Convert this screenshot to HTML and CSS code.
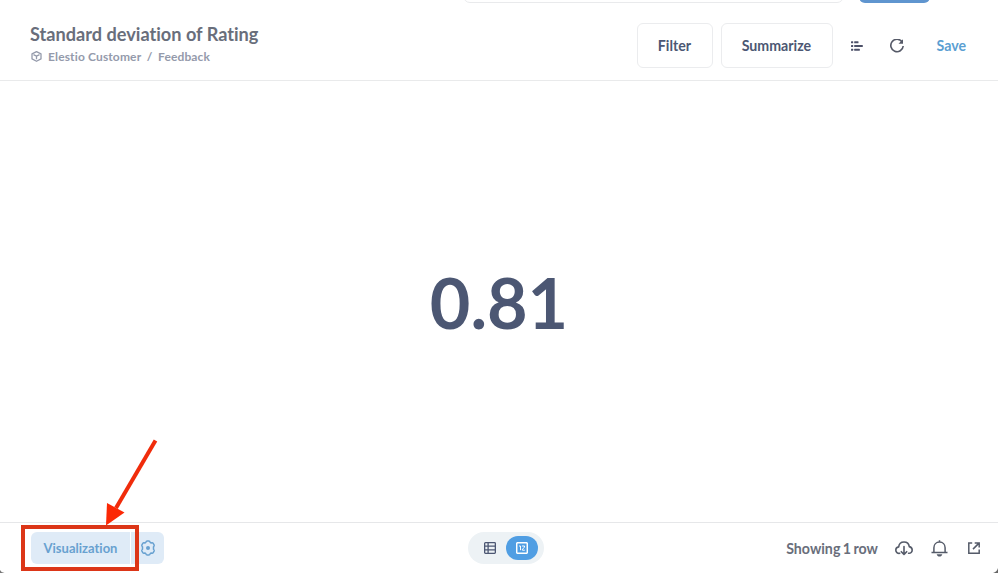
FILE: index.html
```html
<!DOCTYPE html>
<html lang="en">
<head>
<meta charset="utf-8">
<title>Standard deviation of Rating</title>
<link rel="stylesheet" href="styles.css">
</head>
<body>
<div class="app">
  <div class="navbar"><div class="nav-search"></div><div class="nav-new"></div></div>
  <header class="header">
    <div class="heading">
      <h1 class="title">Standard deviation of Rating</h1>
      <div class="crumbs">
        <svg class="cube" width="11" height="11" viewBox="0 0 11 11" fill="none" stroke="currentColor" stroke-width="1.3" stroke-linejoin="round"><path d="M5.5.7 10 2.9v5L5.5 10.3 1 7.9v-5zM2.5 3.7l3 1.4 3-1.4M5.5 5.1v3.2"/></svg>
        <span class="crumb-db">Elestio Customer</span><span class="slash">/</span><span class="crumb-table">Feedback</span>
      </div>
    </div>
    <div class="actions">
      <button class="btn filter"><span>Filter</span></button>
      <button class="btn summarize"><span>Summarize</span></button>
      <svg class="notebook" width="12" height="10" viewBox="0 0 12 10" fill="currentColor"><rect x="0" y=".3" width="2.2" height="2" rx=".5"/><rect x="3.2" y=".3" width="4.3" height="2" rx=".5"/><rect x="0" y="4" width="2.2" height="2" rx=".5"/><rect x="3.2" y="4" width="8.6" height="2" rx=".5"/><rect x="0" y="7.7" width="2.2" height="2" rx=".5"/><rect x="3.2" y="7.7" width="5.6" height="2" rx=".5"/></svg>
      <svg class="refresh" width="14" height="14" viewBox="0 0 14 14" fill="none" stroke="currentColor" stroke-width="1.6"><path d="M12.2 3.1A6.2 6.2 0 1 0 13.2 7"/><path d="M13 .2v4.5H8.5z" fill="currentColor" stroke="none"/></svg>
      <span class="save">Save</span>
    </div>
  </header>
  <main class="result"><span class="value">0.81</span></main>
  <footer class="footer">
    <div class="viz">
      <button class="viz-btn"><span>Visualization</span></button>
      <button class="gear-btn"><svg width="16" height="16" viewBox="0 0 16 16" fill="none" stroke="currentColor" stroke-width="1.5" stroke-linejoin="round"><path d="M5.8 2.4Q6.2 1 7.2 1h1.6q1 0 1.4 1.4l1 .6q1.5-.4 2 .4l.9 1.5q.5.9-.6 1.9v2.4q1.1 1 .6 1.9l-.9 1.5q-.5.8-2 .4l-1 .6Q9.8 15 8.8 15H7.2q-1 0-1.4-1.4l-1-.6q-1.5.4-2-.4l-.9-1.5q-.5-.9.6-1.9V6.8q-1.100-1-.6-1.900l.9-1.500q.5-.8 2-.4z"/><circle cx="8" cy="8" r="2" fill="currentColor" stroke="none"/></svg></button>
    </div>
    <div class="toggle">
      <span class="mode"><svg width="12" height="12" viewBox="0 0 12 12" fill="none" stroke="currentColor" stroke-width="1.3"><rect x=".65" y=".65" width="10.7" height="10.7" rx=".8"/><path d="M.6 4.2h10.8M.6 7.8h10.8M4.1.6v10.8"/></svg></span>
      <span class="mode active"><svg width="12" height="12" viewBox="0 0 12 12" fill="none" stroke="currentColor" stroke-width="1.5"><rect x=".7" y=".7" width="10.6" height="10.6" rx="1"/><path stroke-width="1" d="M3.1 4h1.4v4.2M5.9 4h2.6v1.3L6.4 7.1v1.1h2.4"/></svg></span>
    </div>
    <div class="status">
      <span class="rows">Showing 1 row</span>
      <svg class="cloud" width="18" height="15" viewBox="0 0 18 15" fill="none" stroke="currentColor" stroke-width="1.6" stroke-linecap="round" stroke-linejoin="round"><path d="M4.7 12.3C2.4 12.6.8 11 .8 9.1c0-1.8 1.2-3 2.9-3.2C4 3 6.2 1 9 1c2.7 0 4.9 1.8 5.3 4.6 1.8.4 2.9 1.8 2.9 3.5 0 1.9-1.5 3.4-3.6 3.2M9 5.6v7.6M6.3 10.7 9 13.4l2.7-2.7"/></svg>
      <svg class="bell" width="17" height="17" viewBox="0 0 17 17" fill="none" stroke="currentColor" stroke-width="1.5" stroke-linejoin="round"><path d="M8.5.3v1.9M.5 12.6h16M2.9 12.4V7.8c0-3.3 2.3-5.7 5.6-5.7s5.6 2.4 5.6 5.7v4.6"/><path d="M5.7 14.3h5.6c-.4 1.5-1.4 2.3-2.8 2.3s-2.4-.8-2.8-2.3z" fill="currentColor" stroke="none"/></svg>
      <svg class="share" width="12" height="12" viewBox="0 0 12 12" fill="none" stroke="currentColor" stroke-width="1.5"><path d="M4.2.9H.8v10.4h10.4V7.6M6.7.9h4.5v4.5M11 1.1 5 7.1"/></svg>
    </div>
  </footer>
  <div class="highlight"></div>
  <svg class="arrow" width="60" height="92" viewBox="0 0 60 92"><path d="M55.5 5.5 16 73" stroke="#f02c0b" stroke-width="4" fill="none"/><path d="M6 90.5 7 68l17.5 9.5z" fill="#fb2805"/></svg>
  <svg class="corner left" width="5" height="3" viewBox="0 0 5 3"><path d="M0 0q1 2.4 4.5 3H0z" fill="#777"/></svg>
  <svg class="corner right" width="5" height="5" viewBox="0 0 5 5"><path d="M5 0Q4 4 0 5h5z" fill="#666"/></svg>
</div>
</body>
</html>
```
FILE: styles.css
```css
* { box-sizing: border-box; }
body { margin: 0; background: #fff; font-family: Lato, "Liberation Sans", sans-serif; font-weight: 700; font-variant-ligatures: none; color: #4c5773; }
button { font: inherit; font-variant-ligatures: none; color: inherit; margin: 0; padding: 0; }
svg { display: block; flex: none; }
.app { position: relative; width: 998px; height: 573px; display: flex; flex-direction: column; overflow: hidden; }
.navbar { height: 3px; display: flex; align-items: flex-end; padding-left: 463px; flex: none; overflow: hidden; }
.nav-search { width: 381px; height: 20px; border: 1px solid #e9eaec; border-radius: 7px; flex: none; }
.nav-new { width: 71px; height: 20px; margin-left: 15px; border-radius: 6px; background: #5f95cf; flex: none; }
.header { height: 78px; flex: none; border-bottom: 1px solid #e9eaeb; display: flex; justify-content: space-between; padding: 20px 32px 0 30px; }
.title { margin: 0; font-size: 18.15px; line-height: 22px; color: #696e7b; white-space: nowrap; }
.crumbs { display: flex; align-items: center; margin-top: 4px; font-size: 12px; letter-spacing: .14px; line-height: 16px; color: #949aab; white-space: nowrap; }
.cube { margin: -2px 6.5px 0 .5px; }
.slash { margin: 0 5.5px; }
.actions { display: flex; align-items: center; height: 45px; font-size: 14.2px; }
.btn { height: 45px; background: #fff; border: 1px solid #ebecee; border-radius: 6px; color: #4c5773; padding-right: 2px; }
.filter { width: 76px; margin-right: 8px; }
.summarize { width: 112px; margin-right: 18px; }
.notebook { margin-right: 27px; color: #4c5068; }
.refresh { margin-right: 32px; color: #555967; }
.save { color: #5b9fd2; }
.result { flex: 1; display: flex; align-items: center; justify-content: center; }
.value { font-size: 70px; line-height: 80px; color: #4c5773; }
.footer { height: 51px; flex: none; border-top: 1px solid #e6e7e9; display: grid; grid-template-columns: 437px 76px 1fr; align-items: center; padding: 0 18px 0 31px; }
.viz { display: flex; gap: 1px; }
.viz-btn, .gear-btn { border: 0; height: 32px; background: #dfebf7; color: #68a1d0; }
.viz-btn { width: 99px; border-radius: 6px 0 0 6px; font-size: 13px; }
.gear-btn { width: 33px; padding-left: 1px; border-radius: 0 6px 6px 0; display: flex; align-items: center; justify-content: center; }
.toggle { display: flex; align-items: center; height: 32px; padding: 0 6px; border-radius: 16px; background: #edf2f5; }
.mode { width: 32px; height: 24px; border-radius: 12px; display: flex; align-items: center; justify-content: center; }
.active { background: #509ee3; color: #fff; }
.status { display: flex; align-items: center; justify-content: flex-end; color: #555b69; }
.rows { font-size: 14.2px; word-spacing: -1px; color: #696e7b; white-space: nowrap; }
.cloud { margin-left: 17px; }
.bell { margin-left: 18px; }
.share { margin-left: 20px; }
.highlight { position: absolute; left: 21px; top: 525px; width: 118px; height: 46px; border: 4px solid #dc3618; }
.arrow { position: absolute; left: 100px; top: 435px; }
.corner { position: absolute; bottom: 0; }
.left { left: 0; }
.right { right: 0; }
```
